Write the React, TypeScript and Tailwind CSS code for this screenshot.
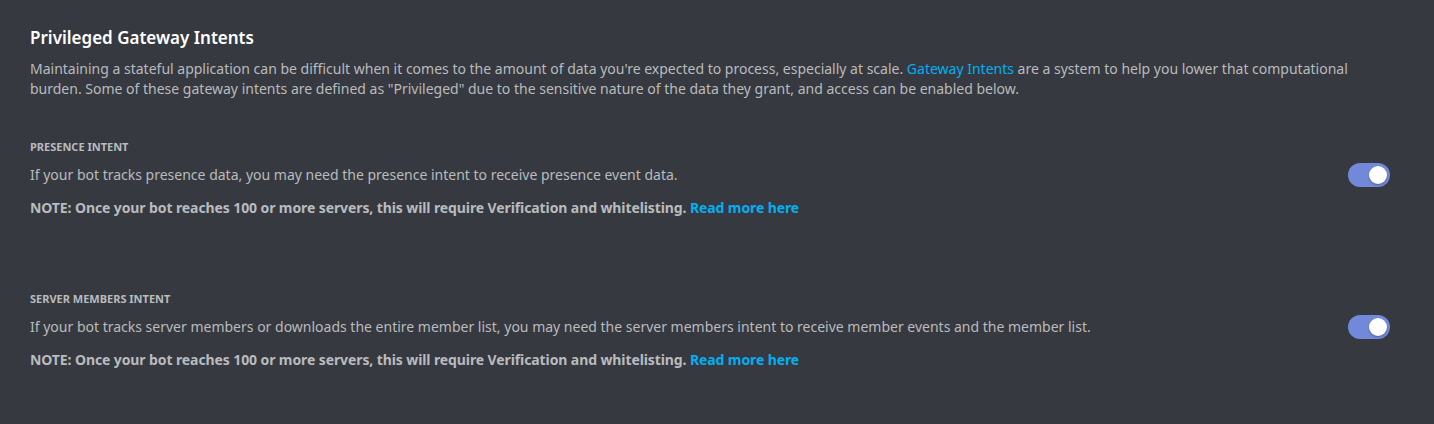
import { useState } from 'react';

type Intent = { id: string; title: string; text: string };

const intents: Intent[] = [
  {
    id: 'presence',
    title: 'Presence Intent',
    text: 'If your bot tracks presence data, you may need the presence intent to receive presence event data.',
  },
  {
    id: 'members',
    title: 'Server Members Intent',
    text: 'If your bot tracks server members or downloads the entire member list, you may need the server members intent to receive member events and the member list.',
  },
];

function Toggle({ on, onChange }: { on: boolean; onChange: () => void }) {
  return (
    <button
      type="button"
      onClick={onChange}
      className={`relative -my-[2px] h-6 w-[42px] shrink-0 rounded-full transition-colors ${on ? 'bg-[#7289da]' : 'bg-[#72767d]'}`}
    >
      <span
        className={`absolute top-[3px] h-[18px] w-[18px] rounded-full bg-white shadow-[0_1px_2px_rgba(0,0,0,0.3)] transition-all ${on ? 'left-[21px]' : 'left-[3px]'}`}
      />
    </button>
  );
}

export default function App() {
  const [enabled, setEnabled] = useState<Record<string, boolean>>({ presence: true, members: true });

  return (
    <div className="min-h-[424px] bg-[#36393f] px-[30px] pt-[27px] font-['Noto_Sans',sans-serif]">
      <h2 className="text-[17px] font-semibold leading-[22px] text-white">Privileged Gateway Intents</h2>
      <p className="mt-[10px] max-w-[1345px] text-[14px] leading-[20px] text-[#b9bbbe]">
        Maintaining a stateful application can be difficult when it comes to the amount of data you're expected to process, especially at scale.{' '}
        <a className="text-[#00b0f4]">Gateway Intents</a> are a system to help you lower that computational burden. Some of these gateway intents are defined as "Privileged" due to the sensitive nature of the data they grant, and access can be enabled below.
      </p>
      <div className="mt-10 flex flex-col gap-[73px] pr-[14px]">
        {intents.map(intent => (
          <section key={intent.id}>
            <h3 className="text-[11px] font-bold uppercase leading-[16px] text-[#b9bbbe]">{intent.title}</h3>
            <div className="mt-[10px] flex items-center justify-between">
              <p className="text-[14px] leading-[20px] text-[#b9bbbe]">{intent.text}</p>
              <Toggle
                on={enabled[intent.id]}
                onChange={() => setEnabled(s => ({ ...s, [intent.id]: !s[intent.id] }))}
              />
            </div>
            <p className="mt-[13px] text-[14px] font-bold leading-[20px] tracking-[-0.1px] text-[#b9bbbe]">
              NOTE: Once your bot reaches 100 or more servers, this will require Verification and whitelisting.{' '}
              <a className="text-[#00b0f4]">Read more here</a>
            </p>
          </section>
        ))}
      </div>
    </div>
  );
}
